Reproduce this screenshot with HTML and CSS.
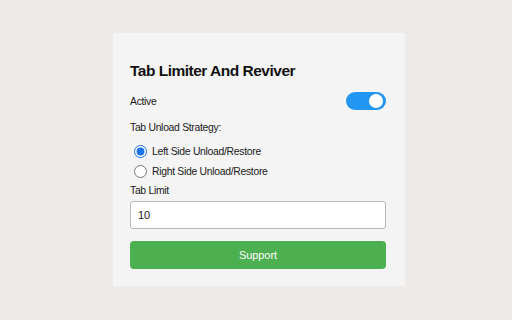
FILE: index.html
```html
<!DOCTYPE html>
<html>
<head>
<meta charset="utf-8">
<link rel="stylesheet" href="styles.css">
</head>
<body>
<div class="panel">
  <h1 class="title">Tab Limiter And Reviver</h1>
  <div class="row active-row">
    <span class="text">Active</span>
    <span class="toggle"><span class="knob"></span></span>
  </div>
  <div class="label strategy">Tab Unload Strategy:</div>
  <label class="radio-row first"><input type="radio" name="s" checked><span class="text">Left Side Unload/Restore</span></label>
  <label class="radio-row"><input type="radio" name="s"><span class="text">Right Side Unload/Restore</span></label>
  <div class="label limit">Tab Limit</div>
  <div class="input">10</div>
  <div class="button">Support</div>
</div>
</body>
</html>
```
FILE: styles.css
```css
html, body {
  margin: 0;
  padding: 0;
}
body {
  background: #eeeae8;
  width: 512px;
  height: 320px;
  font-family: "Liberation Sans", Arial, sans-serif;
  color: #1a1a1a;
}
.panel {
  box-sizing: border-box;
  width: 292px;
  height: 253px;
  margin: 33px 0 0 113px;
  padding: 28px 19px 17px 17px;
  background: #f4f4f4;
  display: flex;
  flex-direction: column;
}
.title {
  margin: 0;
  font-size: 15.5px;
  line-height: 20px;
  font-weight: bold;
  letter-spacing: -0.5px;
  color: #111;
}
.text, .label {
  font-size: 10.4px;
  letter-spacing: -0.3px;
}
.row {
  display: flex;
  justify-content: space-between;
  align-items: center;
}
.active-row {
  margin-top: 11px;
  height: 18px;
}
.toggle {
  width: 40px;
  height: 18px;
  border-radius: 9px;
  background: #2196f3;
  display: flex;
  align-items: center;
  justify-content: flex-end;
  padding-right: 3px;
  box-sizing: border-box;
}
.knob {
  width: 14px;
  height: 14px;
  border-radius: 50%;
  background: #fff;
}
.label {
  line-height: 14px;
}
.strategy {
  margin-top: 11px;
}
.radio-row {
  display: flex;
  align-items: center;
  height: 20px;
}
.radio-row.first {
  margin-top: 6px;
}
.radio-row input {
  margin: 0 5px 0 4px;
  width: 13px;
  height: 13px;
  accent-color: #1a73e8;
}
.limit {
  margin-top: 3px;
}
.input {
  margin-top: 3px;
  box-sizing: border-box;
  height: 28px;
  background: #fff;
  border: 1px solid #b8b8b8;
  border-radius: 3px;
  padding-left: 7px;
  display: flex;
  align-items: center;
  font-size: 11px;
}
.button {
  margin-top: 12px;
  height: 28px;
  border-radius: 4px;
  background: #4caf50;
  color: #fff;
  display: flex;
  align-items: center;
  justify-content: center;
  font-size: 11px;
  letter-spacing: -0.1px;
}
```
